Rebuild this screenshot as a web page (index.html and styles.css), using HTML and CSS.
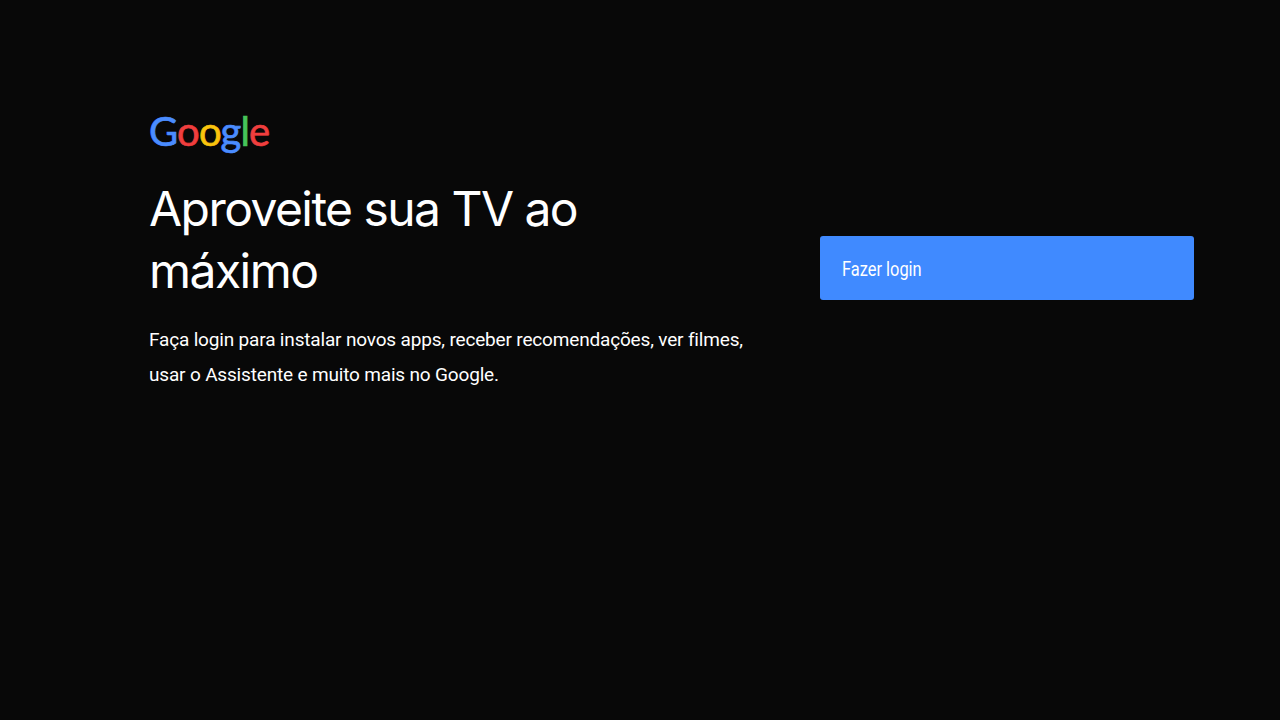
FILE: index.html
```html
<!DOCTYPE html>
<html lang="pt-BR">
<head>
    <meta charset="utf-8">
    <link rel="stylesheet" href="styles.css">
    <title>Fazer login</title>
</head>
<body>
<div class="screen">
    <div class="intro">
        <div class="logo"><span class="blue">G</span><span class="red">o</span><span class="yellow">o</span><span class="blue">g</span><span class="green">l</span><span class="red">e</span></div>
        <h1>Aproveite sua TV ao máximo</h1>
        <p>Faça login para instalar novos apps, receber recomendações, ver filmes, usar o Assistente e muito mais no Google.</p>
    </div>
    <div class="actions">
        <button class="login"><span>Fazer login</span></button>
    </div>
</div>
</body>
</html>
```

FILE: styles.css
```css
html, body {
    margin: 0;
    height: 100%;
}

body {
    background-color: #080808;
    color: #fff;
    font-family: "Roboto", sans-serif;
    overflow: hidden;
}

.screen {
    display: flex;
    height: 720px;
    box-sizing: border-box;
    padding-left: 149px;
}

.intro {
    width: 610px;
    padding-top: 105px;
}

.logo {
    font-family: "Lato", sans-serif;
    font-size: 40px;
    line-height: 52px;
    letter-spacing: -0.9px;
    font-weight: 400;
    height: 52px;
    -webkit-text-stroke: 0.7px;
}

.blue { color: #4a8cff; }
.red { color: #f03e3e; }
.yellow { color: #fbc40d; }
.green { color: #45c45a; }

h1 {
    font-family: "Inter", sans-serif;
    font-size: 48px;
    line-height: 62px;
    font-weight: 400;
    letter-spacing: -1.55px;
    margin: 21px 0 0 0;
    width: 480px;
}

p {
    font-size: 19px;
    line-height: 35px;
    letter-spacing: -0.17px;
    margin: 20px 0 0 0;
}

.actions {
    margin-left: 61px;
    padding-top: 236px;
}

.login {
    display: block;
    width: 374px;
    height: 64px;
    padding: 1px 0 0 22px;
    border: 0;
    border-radius: 3px;
    background: #408aff;
    color: #fff;
    font-family: "Roboto", sans-serif;
    font-size: 20px;
    text-align: left;
}

.login span {
    display: inline-block;
    transform: scaleX(0.82);
    transform-origin: left center;
}
```
